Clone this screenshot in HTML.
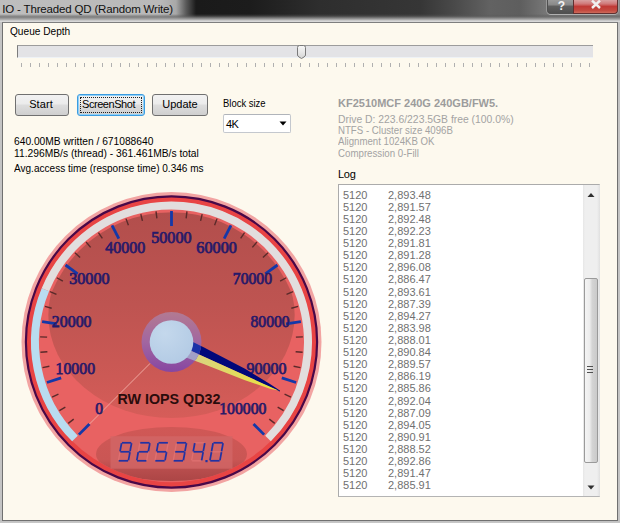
<!DOCTYPE html>
<html><head><meta charset="utf-8">
<style>
*{margin:0;padding:0;box-sizing:border-box}
html,body{width:620px;height:523px;overflow:hidden;background:#C4C4C4;font-family:"Liberation Sans",sans-serif}
.abs{position:absolute}
#frame{position:absolute;left:0;top:0;width:620px;height:523px;
 background:linear-gradient(90deg,#BEBEBE 0,#B9B9B9 160px,#A8A8A8 176px,#5A5A5A 186px,#1A1A1A 196px,#1C1C1C 250px,#2E2E2E 320px,#363636 420px,#4A4A4A 455px,#626262 490px,#5E5E5E 520px,#767676 545px,#888 620px)}
#tbfade{position:absolute;left:0;top:14px;width:620px;height:9px;background:linear-gradient(180deg,rgba(90,90,90,0) 0,rgba(90,90,90,0.5) 2px,rgba(110,110,110,0.8) 3px,#B8B8B8 6px,#D8D8D8 7px,#D8D8D8 9px)}
#sidel{position:absolute;left:0;top:22px;width:3px;height:501px;background:#C4C4C4}
#sider{position:absolute;left:617px;top:22px;width:3px;height:501px;background:#C4C4C4}
#sideb{position:absolute;left:0;top:520px;width:620px;height:3px;background:linear-gradient(180deg,#BDBDBD,#C8C8C8)}
#title{position:absolute;left:3px;top:1px;font-size:12.5px;color:#101010;white-space:nowrap;letter-spacing:0px}
#client{position:absolute;left:2px;top:22px;width:616px;height:499px;background:#FDF9EE;border:1px solid #707070;border-top-color:#7E7E7E}
.btnh{position:absolute;top:0;height:14px;border:1px solid #3A3A3A;border-top:none}
#help{left:547px;width:27px;border-radius:0 0 0 4px;border-color:#505050;box-shadow:0 1px 0 #B0B0B0,-1px 0 0 #999;background:linear-gradient(180deg,#9A9A9A 0,#8A8A8A 35%,#5E5E5E 50%,#505050 100%)}
#close{left:573px;width:45px;border-radius:0 0 4px 0;border-color:#603030;box-shadow:0 1px 0 #B0B0B0,1px 0 0 #999;background:linear-gradient(180deg,#D8A0A0 0,#D07878 30%,#C03A36 50%,#C44A40 80%,#CC6A5A 100%)}
.lbl{position:absolute;font-size:11px;color:#000;white-space:nowrap;line-height:13px}
#track{position:absolute;left:17px;top:45px;width:576px;height:13px;background:#E3E3E6;border-top:1px solid #9C9C9C;border-left:1px solid #7C7C7C;border-bottom:1px solid #EEF2F6}
#thumb{position:absolute;left:297px;top:45px;width:9px;height:14px}
.tk{position:absolute;top:63px;width:1px;height:3.5px;background:#B0B0B0}
.btn{position:absolute;top:94px;height:22px;border:1px solid #707070;border-radius:3px;background:linear-gradient(180deg,#F2F2F2 0,#EBEBEB 45%,#DDDDDD 50%,#CFCFCF 100%);font-size:11px;text-align:center;line-height:19px;color:#000}
#shot{border-color:#3C9CE0;box-shadow:inset 0 0 0 1px #8ED0F8}
#shot::after{content:"";position:absolute;left:2px;top:2px;right:2px;bottom:2px;border:1px dotted #222}
#combo{position:absolute;left:223px;top:114px;width:68px;height:19px;background:#fff;border:1px solid #C4C8CE;border-top-color:#B0B4BA;border-radius:2px}
.gray{position:absolute;font-size:11px;color:#A3A3A3;white-space:nowrap}
#list{position:absolute;left:338px;top:184px;width:262px;height:313px;background:#fff;border:1px solid #ABABAB;border-right-color:#D0D0D0;border-bottom-color:#B4B4B4}
#sb{position:absolute;left:583px;top:185px;width:17px;height:311px;background:linear-gradient(90deg,#E6E6E6 0,#EFEFEF 2px,#EFEFEF 14px,#E0E0E0 17px)}
#sth{position:absolute;left:584px;top:278px;width:14px;height:185px;border:1px solid #9A9A9A;border-radius:2px;background:linear-gradient(90deg,#F4F4F4 0,#ECECEC 40%,#D4D4D4 60%,#CACACA 100%)}
.lr{position:absolute;left:343px;font-size:11px;color:#707070;white-space:nowrap;line-height:12px}
.lr .c1{position:absolute;left:0}
.lr .c2{position:absolute;left:45px}
svg text.gl{font-family:"Liberation Serif",serif;font-size:16px;fill:#1C1A72;stroke:#2C1A66;stroke-width:0.75}
svg text.gt{font-family:"Liberation Sans",sans-serif;font-size:14px;font-weight:bold;fill:#2A0C0C}
</style></head><body>
<div id="frame"></div>
<div id="tbfade"></div>
<div id="sidel"></div><div id="sider"></div><div id="sideb"></div>
<div id="title" style="font-size:11.5px;letter-spacing:-0.17px;top:2.7px;left:2.3px">IO - Threaded QD (Random Write)</div>
<div class="btnh" id="help"></div>
<div class="btnh" id="close"></div>
<svg class="abs" style="left:0;top:0" width="620" height="20">
 <text x="561.5" y="10" font-family="Liberation Sans" font-weight="bold" font-size="12" fill="#F4F4F4" text-anchor="middle">?</text>
 <path d="M592,0.5 L600,8 M600,0.5 L592,8" stroke="#F0F0F0" stroke-width="2.4"/>
</svg>
<div id="client"></div>
<div class="lbl" style="left:10px;top:25px;transform-origin:0 0;transform:scaleX(0.92)">Queue Depth</div>
<div id="track"></div>
<svg id="thumb" viewBox="0 0 9 14"><defs><linearGradient id="tg" x1="0" y1="0" x2="0" y2="1"><stop offset="0" stop-color="#F6F6F6"/><stop offset="0.5" stop-color="#E8E8E8"/><stop offset="1" stop-color="#D4D4D4"/></linearGradient></defs><path d="M0.5,2.5 Q0.5,0.5 2.5,0.5 L6.5,0.5 Q8.5,0.5 8.5,2.5 L8.5,10 Q8.5,11 7,12 L4.5,13.5 L2,12 Q0.5,11 0.5,10 Z" fill="url(#tg)" stroke="#7A7A7A" stroke-width="1"/></svg>
<div class="tk" style="left:20.5px"></div>
<div class="tk" style="left:29.5px"></div>
<div class="tk" style="left:38.5px"></div>
<div class="tk" style="left:47.6px"></div>
<div class="tk" style="left:56.6px"></div>
<div class="tk" style="left:65.6px"></div>
<div class="tk" style="left:74.6px"></div>
<div class="tk" style="left:83.7px"></div>
<div class="tk" style="left:92.7px"></div>
<div class="tk" style="left:101.7px"></div>
<div class="tk" style="left:110.7px"></div>
<div class="tk" style="left:119.7px"></div>
<div class="tk" style="left:128.8px"></div>
<div class="tk" style="left:137.8px"></div>
<div class="tk" style="left:146.8px"></div>
<div class="tk" style="left:155.8px"></div>
<div class="tk" style="left:164.9px"></div>
<div class="tk" style="left:173.9px"></div>
<div class="tk" style="left:182.9px"></div>
<div class="tk" style="left:191.9px"></div>
<div class="tk" style="left:200.9px"></div>
<div class="tk" style="left:210.0px"></div>
<div class="tk" style="left:219.0px"></div>
<div class="tk" style="left:228.0px"></div>
<div class="tk" style="left:237.0px"></div>
<div class="tk" style="left:246.1px"></div>
<div class="tk" style="left:255.1px"></div>
<div class="tk" style="left:264.1px"></div>
<div class="tk" style="left:273.1px"></div>
<div class="tk" style="left:282.1px"></div>
<div class="tk" style="left:291.2px"></div>
<div class="tk" style="left:300.2px"></div>
<div class="tk" style="left:309.2px"></div>
<div class="tk" style="left:318.2px"></div>
<div class="tk" style="left:327.3px"></div>
<div class="tk" style="left:336.3px"></div>
<div class="tk" style="left:345.3px"></div>
<div class="tk" style="left:354.3px"></div>
<div class="tk" style="left:363.3px"></div>
<div class="tk" style="left:372.4px"></div>
<div class="tk" style="left:381.4px"></div>
<div class="tk" style="left:390.4px"></div>
<div class="tk" style="left:399.4px"></div>
<div class="tk" style="left:408.5px"></div>
<div class="tk" style="left:417.5px"></div>
<div class="tk" style="left:426.5px"></div>
<div class="tk" style="left:435.5px"></div>
<div class="tk" style="left:444.5px"></div>
<div class="tk" style="left:453.6px"></div>
<div class="tk" style="left:462.6px"></div>
<div class="tk" style="left:471.6px"></div>
<div class="tk" style="left:480.6px"></div>
<div class="tk" style="left:489.7px"></div>
<div class="tk" style="left:498.7px"></div>
<div class="tk" style="left:507.7px"></div>
<div class="tk" style="left:516.7px"></div>
<div class="tk" style="left:525.7px"></div>
<div class="tk" style="left:534.8px"></div>
<div class="tk" style="left:543.8px"></div>
<div class="tk" style="left:552.8px"></div>
<div class="tk" style="left:561.8px"></div>
<div class="tk" style="left:570.9px"></div>
<div class="tk" style="left:579.9px"></div>
<div class="tk" style="left:588.9px"></div>
<div class="btn" style="left:15px;width:54px;padding-right:2px;letter-spacing:0.1px">Start</div>
<div class="btn" id="shot" style="left:77px;width:68px;letter-spacing:-0.45px;padding-right:5px">ScreenShot</div>
<div class="btn" style="left:152px;width:56px">Update</div>
<div class="lbl" style="left:223px;top:97px;transform-origin:0 0;transform:scaleX(0.86)">Block size</div>
<div id="combo"></div>
<div class="lbl" style="left:226px;top:118px;letter-spacing:-0.5px">4K</div>
<svg class="abs" style="left:279px;top:121px" width="9" height="6"><path d="M0.5,0.5 L7.5,0.5 L4,4.5 Z" fill="#000"/></svg>
<div class="lbl" style="left:14px;top:135px;transform-origin:0 0;transform:scaleX(0.93)">640.00MB written / 671088640</div>
<div class="lbl" style="left:14px;top:147px;transform-origin:0 0;transform:scaleX(0.934)">11.296MB/s (thread) - 361.461MB/s total</div>
<div class="lbl" style="left:14px;top:161.5px;transform-origin:0 0;transform:scaleX(0.913)">Avg.access time (response time) 0.346 ms</div>
<div class="gray" style="left:338px;top:97px;font-weight:bold;color:#9C9C9C">KF2510MCF 240G 240GB/FW5.</div>
<div class="gray" style="left:338px;top:113px;transform-origin:0 0;transform:scaleX(0.942)">Drive D: 223.6/223.5GB free (100.0%)</div>
<div class="gray" style="left:338px;top:124px;transform-origin:0 0;transform:scaleX(0.878)">NTFS - Cluster size 4096B</div>
<div class="gray" style="left:338px;top:135px;transform-origin:0 0;transform:scaleX(0.877)">Alignment 1024KB OK</div>
<div class="gray" style="left:338px;top:147px;transform-origin:0 0;transform:scaleX(0.882)">Compression 0-Fill</div>
<div class="lbl" style="left:338px;top:168px;letter-spacing:-0.3px">Log</div>
<div id="list"></div>
<div class="lr" style="top:188.6px"><span class="c1">5120</span><span class="c2">2,893.48</span></div>
<div class="lr" style="top:200.7px"><span class="c1">5120</span><span class="c2">2,891.57</span></div>
<div class="lr" style="top:212.8px"><span class="c1">5120</span><span class="c2">2,892.48</span></div>
<div class="lr" style="top:224.9px"><span class="c1">5120</span><span class="c2">2,892.23</span></div>
<div class="lr" style="top:237.0px"><span class="c1">5120</span><span class="c2">2,891.81</span></div>
<div class="lr" style="top:249.1px"><span class="c1">5120</span><span class="c2">2,891.28</span></div>
<div class="lr" style="top:261.3px"><span class="c1">5120</span><span class="c2">2,896.08</span></div>
<div class="lr" style="top:273.4px"><span class="c1">5120</span><span class="c2">2,886.47</span></div>
<div class="lr" style="top:285.5px"><span class="c1">5120</span><span class="c2">2,893.61</span></div>
<div class="lr" style="top:297.6px"><span class="c1">5120</span><span class="c2">2,887.39</span></div>
<div class="lr" style="top:309.7px"><span class="c1">5120</span><span class="c2">2,894.27</span></div>
<div class="lr" style="top:321.8px"><span class="c1">5120</span><span class="c2">2,883.98</span></div>
<div class="lr" style="top:333.9px"><span class="c1">5120</span><span class="c2">2,888.01</span></div>
<div class="lr" style="top:346.0px"><span class="c1">5120</span><span class="c2">2,890.84</span></div>
<div class="lr" style="top:358.1px"><span class="c1">5120</span><span class="c2">2,889.57</span></div>
<div class="lr" style="top:370.2px"><span class="c1">5120</span><span class="c2">2,886.19</span></div>
<div class="lr" style="top:382.4px"><span class="c1">5120</span><span class="c2">2,885.86</span></div>
<div class="lr" style="top:394.5px"><span class="c1">5120</span><span class="c2">2,892.04</span></div>
<div class="lr" style="top:406.6px"><span class="c1">5120</span><span class="c2">2,887.09</span></div>
<div class="lr" style="top:418.7px"><span class="c1">5120</span><span class="c2">2,894.05</span></div>
<div class="lr" style="top:430.8px"><span class="c1">5120</span><span class="c2">2,890.91</span></div>
<div class="lr" style="top:442.9px"><span class="c1">5120</span><span class="c2">2,888.52</span></div>
<div class="lr" style="top:455.0px"><span class="c1">5120</span><span class="c2">2,892.86</span></div>
<div class="lr" style="top:467.1px"><span class="c1">5120</span><span class="c2">2,891.47</span></div>
<div class="lr" style="top:479.2px"><span class="c1">5120</span><span class="c2">2,885.91</span></div>
<div id="sb"></div>
<svg class="abs" style="left:587px;top:192px" width="9" height="6"><path d="M0.5,5 L7.5,5 L4,1 Z" fill="#303030"/></svg>
<div id="sth"></div>
<svg class="abs" style="left:586px;top:365px" width="9" height="9"><path d="M1,1.5h6M1,4.5h6M1,7.5h6" stroke="#505050" stroke-width="1"/></svg>
<svg class="abs" style="left:587px;top:485px" width="9" height="6"><path d="M0.5,0.5 L7.5,0.5 L4,4.5 Z" fill="#303030"/></svg>
<svg class="abs" style="left:0;top:0" width="620" height="523">
<circle cx="171.5" cy="342.0" r="150" fill="#F2A4A2"/>
<circle cx="171.5" cy="342.0" r="145.6" fill="#E84444" stroke="#480848" stroke-width="2.2"/>
<circle cx="171.5" cy="342.0" r="140.2" fill="#E86262"/>
<clipPath id="cin"><circle cx="171.5" cy="342.0" r="129.8"/></clipPath>
<clipPath id="cin2"><circle cx="171.5" cy="342.0" r="140.2"/></clipPath>
<linearGradient id="gd" gradientUnits="userSpaceOnUse" x1="0" y1="212" x2="0" y2="418"><stop offset="0" stop-color="#B24E4C"/><stop offset="0.45" stop-color="#BE5451"/><stop offset="0.8" stop-color="#CC5955"/><stop offset="1" stop-color="#D65D59"/></linearGradient>
<ellipse cx="171.5" cy="315" rx="123.2" ry="103" fill="url(#gd)" clip-path="url(#cin)"/>
<path d="M45.39,289.76 A136.5,136.5 0 1 1 268.02,438.52" fill="none" stroke="#E2DEDE" stroke-width="8"/>
<path d="M74.98,438.52 A136.5,136.5 0 0 1 45.39,289.76" fill="none" stroke="#B9DCF0" stroke-width="8"/>
<linearGradient id="gl" gradientUnits="userSpaceOnUse" x1="0" y1="427" x2="0" y2="481"><stop offset="0" stop-color="#D05856"/><stop offset="0.6" stop-color="#CA5654"/><stop offset="0.75" stop-color="#BA4E4E"/><stop offset="1" stop-color="#AC4646"/></linearGradient>
<ellipse cx="171.5" cy="454" rx="75.5" ry="27" fill="url(#gl)" clip-path="url(#cin2)"/>
<rect x="110.5" y="436.2" width="122" height="32.5" fill="#D26666" opacity="0.8"/>
<line x1="122.80" y1="442.80" x2="130.40" y2="442.80" stroke="#DE7070" stroke-width="1.4" stroke-linecap="square"/><line x1="131.39" y1="444.00" x2="130.21" y2="450.60" stroke="#DE7070" stroke-width="1.4" stroke-linecap="square"/><line x1="129.79" y1="453.00" x2="128.61" y2="459.60" stroke="#DE7070" stroke-width="1.4" stroke-linecap="square"/><line x1="119.60" y1="460.80" x2="127.20" y2="460.80" stroke="#DE7070" stroke-width="1.4" stroke-linecap="square"/><line x1="119.79" y1="453.00" x2="118.61" y2="459.60" stroke="#DE7070" stroke-width="1.4" stroke-linecap="square"/><line x1="121.39" y1="444.00" x2="120.21" y2="450.60" stroke="#DE7070" stroke-width="1.4" stroke-linecap="square"/><line x1="121.20" y1="451.80" x2="128.80" y2="451.80" stroke="#DE7070" stroke-width="1.4" stroke-linecap="square"/>
<line x1="141.10" y1="442.80" x2="148.70" y2="442.80" stroke="#DE7070" stroke-width="1.4" stroke-linecap="square"/><line x1="149.69" y1="444.00" x2="148.51" y2="450.60" stroke="#DE7070" stroke-width="1.4" stroke-linecap="square"/><line x1="148.09" y1="453.00" x2="146.91" y2="459.60" stroke="#DE7070" stroke-width="1.4" stroke-linecap="square"/><line x1="137.90" y1="460.80" x2="145.50" y2="460.80" stroke="#DE7070" stroke-width="1.4" stroke-linecap="square"/><line x1="138.09" y1="453.00" x2="136.91" y2="459.60" stroke="#DE7070" stroke-width="1.4" stroke-linecap="square"/><line x1="139.69" y1="444.00" x2="138.51" y2="450.60" stroke="#DE7070" stroke-width="1.4" stroke-linecap="square"/><line x1="139.50" y1="451.80" x2="147.10" y2="451.80" stroke="#DE7070" stroke-width="1.4" stroke-linecap="square"/>
<line x1="159.40" y1="442.80" x2="167.00" y2="442.80" stroke="#DE7070" stroke-width="1.4" stroke-linecap="square"/><line x1="167.99" y1="444.00" x2="166.81" y2="450.60" stroke="#DE7070" stroke-width="1.4" stroke-linecap="square"/><line x1="166.39" y1="453.00" x2="165.21" y2="459.60" stroke="#DE7070" stroke-width="1.4" stroke-linecap="square"/><line x1="156.20" y1="460.80" x2="163.80" y2="460.80" stroke="#DE7070" stroke-width="1.4" stroke-linecap="square"/><line x1="156.39" y1="453.00" x2="155.21" y2="459.60" stroke="#DE7070" stroke-width="1.4" stroke-linecap="square"/><line x1="157.99" y1="444.00" x2="156.81" y2="450.60" stroke="#DE7070" stroke-width="1.4" stroke-linecap="square"/><line x1="157.80" y1="451.80" x2="165.40" y2="451.80" stroke="#DE7070" stroke-width="1.4" stroke-linecap="square"/>
<line x1="177.70" y1="442.80" x2="185.30" y2="442.80" stroke="#DE7070" stroke-width="1.4" stroke-linecap="square"/><line x1="186.29" y1="444.00" x2="185.11" y2="450.60" stroke="#DE7070" stroke-width="1.4" stroke-linecap="square"/><line x1="184.69" y1="453.00" x2="183.51" y2="459.60" stroke="#DE7070" stroke-width="1.4" stroke-linecap="square"/><line x1="174.50" y1="460.80" x2="182.10" y2="460.80" stroke="#DE7070" stroke-width="1.4" stroke-linecap="square"/><line x1="174.69" y1="453.00" x2="173.51" y2="459.60" stroke="#DE7070" stroke-width="1.4" stroke-linecap="square"/><line x1="176.29" y1="444.00" x2="175.11" y2="450.60" stroke="#DE7070" stroke-width="1.4" stroke-linecap="square"/><line x1="176.10" y1="451.80" x2="183.70" y2="451.80" stroke="#DE7070" stroke-width="1.4" stroke-linecap="square"/>
<line x1="196.00" y1="442.80" x2="203.60" y2="442.80" stroke="#DE7070" stroke-width="1.4" stroke-linecap="square"/><line x1="204.59" y1="444.00" x2="203.41" y2="450.60" stroke="#DE7070" stroke-width="1.4" stroke-linecap="square"/><line x1="202.99" y1="453.00" x2="201.81" y2="459.60" stroke="#DE7070" stroke-width="1.4" stroke-linecap="square"/><line x1="192.80" y1="460.80" x2="200.40" y2="460.80" stroke="#DE7070" stroke-width="1.4" stroke-linecap="square"/><line x1="192.99" y1="453.00" x2="191.81" y2="459.60" stroke="#DE7070" stroke-width="1.4" stroke-linecap="square"/><line x1="194.59" y1="444.00" x2="193.41" y2="450.60" stroke="#DE7070" stroke-width="1.4" stroke-linecap="square"/><line x1="194.40" y1="451.80" x2="202.00" y2="451.80" stroke="#DE7070" stroke-width="1.4" stroke-linecap="square"/>
<line x1="214.30" y1="442.80" x2="221.90" y2="442.80" stroke="#DE7070" stroke-width="1.4" stroke-linecap="square"/><line x1="222.89" y1="444.00" x2="221.71" y2="450.60" stroke="#DE7070" stroke-width="1.4" stroke-linecap="square"/><line x1="221.29" y1="453.00" x2="220.11" y2="459.60" stroke="#DE7070" stroke-width="1.4" stroke-linecap="square"/><line x1="211.10" y1="460.80" x2="218.70" y2="460.80" stroke="#DE7070" stroke-width="1.4" stroke-linecap="square"/><line x1="211.29" y1="453.00" x2="210.11" y2="459.60" stroke="#DE7070" stroke-width="1.4" stroke-linecap="square"/><line x1="212.89" y1="444.00" x2="211.71" y2="450.60" stroke="#DE7070" stroke-width="1.4" stroke-linecap="square"/><line x1="212.70" y1="451.80" x2="220.30" y2="451.80" stroke="#DE7070" stroke-width="1.4" stroke-linecap="square"/>
<line x1="122.80" y1="442.80" x2="130.40" y2="442.80" stroke="#2232A2" stroke-width="1.75" stroke-linecap="square"/><line x1="131.39" y1="444.00" x2="130.21" y2="450.60" stroke="#2232A2" stroke-width="1.75" stroke-linecap="square"/><line x1="129.79" y1="453.00" x2="128.61" y2="459.60" stroke="#2232A2" stroke-width="1.75" stroke-linecap="square"/><line x1="119.60" y1="460.80" x2="127.20" y2="460.80" stroke="#2232A2" stroke-width="1.75" stroke-linecap="square"/><line x1="121.39" y1="444.00" x2="120.21" y2="450.60" stroke="#2232A2" stroke-width="1.75" stroke-linecap="square"/><line x1="121.20" y1="451.80" x2="128.80" y2="451.80" stroke="#2232A2" stroke-width="1.75" stroke-linecap="square"/>
<line x1="141.10" y1="442.80" x2="148.70" y2="442.80" stroke="#2232A2" stroke-width="1.75" stroke-linecap="square"/><line x1="149.69" y1="444.00" x2="148.51" y2="450.60" stroke="#2232A2" stroke-width="1.75" stroke-linecap="square"/><line x1="139.50" y1="451.80" x2="147.10" y2="451.80" stroke="#2232A2" stroke-width="1.75" stroke-linecap="square"/><line x1="138.09" y1="453.00" x2="136.91" y2="459.60" stroke="#2232A2" stroke-width="1.75" stroke-linecap="square"/><line x1="137.90" y1="460.80" x2="145.50" y2="460.80" stroke="#2232A2" stroke-width="1.75" stroke-linecap="square"/>
<line x1="159.40" y1="442.80" x2="167.00" y2="442.80" stroke="#2232A2" stroke-width="1.75" stroke-linecap="square"/><line x1="157.99" y1="444.00" x2="156.81" y2="450.60" stroke="#2232A2" stroke-width="1.75" stroke-linecap="square"/><line x1="157.80" y1="451.80" x2="165.40" y2="451.80" stroke="#2232A2" stroke-width="1.75" stroke-linecap="square"/><line x1="166.39" y1="453.00" x2="165.21" y2="459.60" stroke="#2232A2" stroke-width="1.75" stroke-linecap="square"/><line x1="156.20" y1="460.80" x2="163.80" y2="460.80" stroke="#2232A2" stroke-width="1.75" stroke-linecap="square"/>
<line x1="177.70" y1="442.80" x2="185.30" y2="442.80" stroke="#2232A2" stroke-width="1.75" stroke-linecap="square"/><line x1="186.29" y1="444.00" x2="185.11" y2="450.60" stroke="#2232A2" stroke-width="1.75" stroke-linecap="square"/><line x1="176.10" y1="451.80" x2="183.70" y2="451.80" stroke="#2232A2" stroke-width="1.75" stroke-linecap="square"/><line x1="184.69" y1="453.00" x2="183.51" y2="459.60" stroke="#2232A2" stroke-width="1.75" stroke-linecap="square"/><line x1="174.50" y1="460.80" x2="182.10" y2="460.80" stroke="#2232A2" stroke-width="1.75" stroke-linecap="square"/>
<line x1="194.59" y1="444.00" x2="193.41" y2="450.60" stroke="#2232A2" stroke-width="1.75" stroke-linecap="square"/><line x1="194.40" y1="451.80" x2="202.00" y2="451.80" stroke="#2232A2" stroke-width="1.75" stroke-linecap="square"/><line x1="204.59" y1="444.00" x2="203.41" y2="450.60" stroke="#2232A2" stroke-width="1.75" stroke-linecap="square"/><line x1="202.99" y1="453.00" x2="201.81" y2="459.60" stroke="#2232A2" stroke-width="1.75" stroke-linecap="square"/>
<line x1="214.30" y1="442.80" x2="221.90" y2="442.80" stroke="#2232A2" stroke-width="1.75" stroke-linecap="square"/><line x1="222.89" y1="444.00" x2="221.71" y2="450.60" stroke="#2232A2" stroke-width="1.75" stroke-linecap="square"/><line x1="221.29" y1="453.00" x2="220.11" y2="459.60" stroke="#2232A2" stroke-width="1.75" stroke-linecap="square"/><line x1="211.10" y1="460.80" x2="218.70" y2="460.80" stroke="#2232A2" stroke-width="1.75" stroke-linecap="square"/><line x1="211.29" y1="453.00" x2="210.11" y2="459.60" stroke="#2232A2" stroke-width="1.75" stroke-linecap="square"/><line x1="212.89" y1="444.00" x2="211.71" y2="450.60" stroke="#2232A2" stroke-width="1.75" stroke-linecap="square"/>
<rect x="205.4" y="460" width="2.2" height="2.2" fill="#2232A2"/>
<line x1="73.73" y1="419.08" x2="68.23" y2="423.41" stroke="#5A2A2A" stroke-width="1.4"/>
<line x1="65.35" y1="407.05" x2="59.38" y2="410.71" stroke="#5A2A2A" stroke-width="1.4"/>
<line x1="58.44" y1="394.12" x2="52.08" y2="397.05" stroke="#5A2A2A" stroke-width="1.4"/>
<line x1="49.39" y1="366.29" x2="42.53" y2="367.65" stroke="#5A2A2A" stroke-width="1.4"/>
<line x1="47.38" y1="351.77" x2="40.41" y2="352.32" stroke="#5A2A2A" stroke-width="1.4"/>
<line x1="47.10" y1="337.11" x2="40.10" y2="336.84" stroke="#5A2A2A" stroke-width="1.4"/>
<line x1="51.67" y1="308.21" x2="44.94" y2="306.31" stroke="#5A2A2A" stroke-width="1.4"/>
<line x1="56.48" y1="294.36" x2="50.01" y2="291.68" stroke="#5A2A2A" stroke-width="1.4"/>
<line x1="62.87" y1="281.17" x2="56.77" y2="277.75" stroke="#5A2A2A" stroke-width="1.4"/>
<line x1="80.08" y1="257.49" x2="74.94" y2="252.74" stroke="#5A2A2A" stroke-width="1.4"/>
<line x1="90.64" y1="247.33" x2="86.10" y2="242.01" stroke="#5A2A2A" stroke-width="1.4"/>
<line x1="102.33" y1="238.48" x2="98.44" y2="232.66" stroke="#5A2A2A" stroke-width="1.4"/>
<line x1="128.41" y1="225.20" x2="125.99" y2="218.63" stroke="#5A2A2A" stroke-width="1.4"/>
<line x1="142.44" y1="220.94" x2="140.80" y2="214.13" stroke="#5A2A2A" stroke-width="1.4"/>
<line x1="156.87" y1="218.36" x2="156.04" y2="211.41" stroke="#5A2A2A" stroke-width="1.4"/>
<line x1="186.13" y1="218.36" x2="186.96" y2="211.41" stroke="#5A2A2A" stroke-width="1.4"/>
<line x1="200.56" y1="220.94" x2="202.20" y2="214.13" stroke="#5A2A2A" stroke-width="1.4"/>
<line x1="214.59" y1="225.20" x2="217.01" y2="218.63" stroke="#5A2A2A" stroke-width="1.4"/>
<line x1="240.67" y1="238.48" x2="244.56" y2="232.66" stroke="#5A2A2A" stroke-width="1.4"/>
<line x1="252.36" y1="247.33" x2="256.90" y2="242.01" stroke="#5A2A2A" stroke-width="1.4"/>
<line x1="262.92" y1="257.49" x2="268.06" y2="252.74" stroke="#5A2A2A" stroke-width="1.4"/>
<line x1="280.13" y1="281.17" x2="286.23" y2="277.75" stroke="#5A2A2A" stroke-width="1.4"/>
<line x1="286.52" y1="294.36" x2="292.99" y2="291.68" stroke="#5A2A2A" stroke-width="1.4"/>
<line x1="291.33" y1="308.21" x2="298.06" y2="306.31" stroke="#5A2A2A" stroke-width="1.4"/>
<line x1="295.90" y1="337.11" x2="302.90" y2="336.84" stroke="#5A2A2A" stroke-width="1.4"/>
<line x1="295.62" y1="351.77" x2="302.59" y2="352.32" stroke="#5A2A2A" stroke-width="1.4"/>
<line x1="293.61" y1="366.29" x2="300.47" y2="367.65" stroke="#5A2A2A" stroke-width="1.4"/>
<line x1="284.56" y1="394.12" x2="290.92" y2="397.05" stroke="#5A2A2A" stroke-width="1.4"/>
<line x1="277.65" y1="407.05" x2="283.62" y2="410.71" stroke="#5A2A2A" stroke-width="1.4"/>
<line x1="269.27" y1="419.08" x2="274.77" y2="423.41" stroke="#5A2A2A" stroke-width="1.4"/>
<line x1="89.48" y1="424.02" x2="78.87" y2="434.63" stroke="#1438A8" stroke-width="2.8"/>
<line x1="61.18" y1="377.85" x2="46.91" y2="382.48" stroke="#1438A8" stroke-width="2.8"/>
<line x1="56.93" y1="323.85" x2="42.11" y2="321.51" stroke="#1438A8" stroke-width="2.8"/>
<line x1="77.65" y1="273.82" x2="65.52" y2="265.00" stroke="#1438A8" stroke-width="2.8"/>
<line x1="118.84" y1="238.64" x2="112.03" y2="225.28" stroke="#1438A8" stroke-width="2.8"/>
<line x1="171.50" y1="226.00" x2="171.50" y2="211.00" stroke="#1438A8" stroke-width="2.8"/>
<line x1="224.16" y1="238.64" x2="230.97" y2="225.28" stroke="#1438A8" stroke-width="2.8"/>
<line x1="265.35" y1="273.82" x2="277.48" y2="265.00" stroke="#1438A8" stroke-width="2.8"/>
<line x1="286.07" y1="323.85" x2="300.89" y2="321.51" stroke="#1438A8" stroke-width="2.8"/>
<line x1="281.82" y1="377.85" x2="296.09" y2="382.48" stroke="#1438A8" stroke-width="2.8"/>
<line x1="253.52" y1="424.02" x2="264.13" y2="434.63" stroke="#1438A8" stroke-width="2.8"/>
<line x1="150.29" y1="363.21" x2="89.48" y2="424.02" stroke="#F0A8A0" stroke-width="1"/>
<text x="99.2" y="414.1" text-anchor="middle" class="gl" textLength="7.8" lengthAdjust="spacingAndGlyphs">0</text>
<text x="75.3" y="374.1" text-anchor="middle" class="gl" textLength="39.5" lengthAdjust="spacingAndGlyphs">10000</text>
<text x="71.7" y="326.8" text-anchor="middle" class="gl" textLength="39.7" lengthAdjust="spacingAndGlyphs">20000</text>
<text x="89.4" y="284.1" text-anchor="middle" class="gl" textLength="40.5" lengthAdjust="spacingAndGlyphs">30000</text>
<text x="125.3" y="253.4" text-anchor="middle" class="gl" textLength="40.0" lengthAdjust="spacingAndGlyphs">40000</text>
<text x="171.4" y="242.6" text-anchor="middle" class="gl" textLength="40.4" lengthAdjust="spacingAndGlyphs">50000</text>
<text x="216.6" y="253.4" text-anchor="middle" class="gl" textLength="40.5" lengthAdjust="spacingAndGlyphs">60000</text>
<text x="252.4" y="284.1" text-anchor="middle" class="gl" textLength="39.2" lengthAdjust="spacingAndGlyphs">70000</text>
<text x="270.1" y="326.8" text-anchor="middle" class="gl" textLength="39.2" lengthAdjust="spacingAndGlyphs">80000</text>
<text x="266.6" y="374.1" text-anchor="middle" class="gl" textLength="40.0" lengthAdjust="spacingAndGlyphs">90000</text>
<text x="242.8" y="414.1" text-anchor="middle" class="gl" textLength="47.2" lengthAdjust="spacingAndGlyphs">100000</text>
<text x="117.4" y="404" class="gt" textLength="103" lengthAdjust="spacingAndGlyphs">RW IOPS QD32</text>
<path d="M171.5,331.2 L192,341.5 L203.6,347.3 L245,368.7 L270,384 L280.2,390.8 L279.6,391.4 L171.5,342 Z" fill="#00087A"/>
<linearGradient id="gy" gradientUnits="userSpaceOnUse" x1="190" y1="0" x2="280" y2="0"><stop offset="0" stop-color="#D8D284"/><stop offset="1" stop-color="#ECE23A"/></linearGradient>
<path d="M171.5,342 L279,390.8 L270,388.8 L245,380.2 L203.6,364.1 L192,359.8 L171.5,352.1 Z" fill="url(#gy)"/>
<linearGradient id="gh" x1="0" y1="0" x2="0" y2="1"><stop offset="0" stop-color="#B27A92"/><stop offset="0.5" stop-color="#A266A0"/><stop offset="1" stop-color="#8646A2"/></linearGradient>
<circle cx="171.5" cy="342.0" r="30" fill="url(#gh)"/>
<clipPath id="cring"><circle cx="171.5" cy="342.0" r="30"/></clipPath>
<g clip-path="url(#cring)"><path d="M171.5,331.2 L192,341.5 L245,368 L245,375.4 L171.5,342 Z" fill="#1A32A8"/><path d="M171.5,342 L245,375.4 L245,379.6 L192,359.8 L171.5,352.1 Z" fill="#A2A0C6"/></g>
<radialGradient id="gi" cx="0.35" cy="0.3" r="0.8"><stop offset="0" stop-color="#C4D8EC"/><stop offset="1" stop-color="#B2CAE4"/></radialGradient>
<circle cx="171.5" cy="342.0" r="21.8" fill="url(#gi)"/>
</svg>
</body></html>
